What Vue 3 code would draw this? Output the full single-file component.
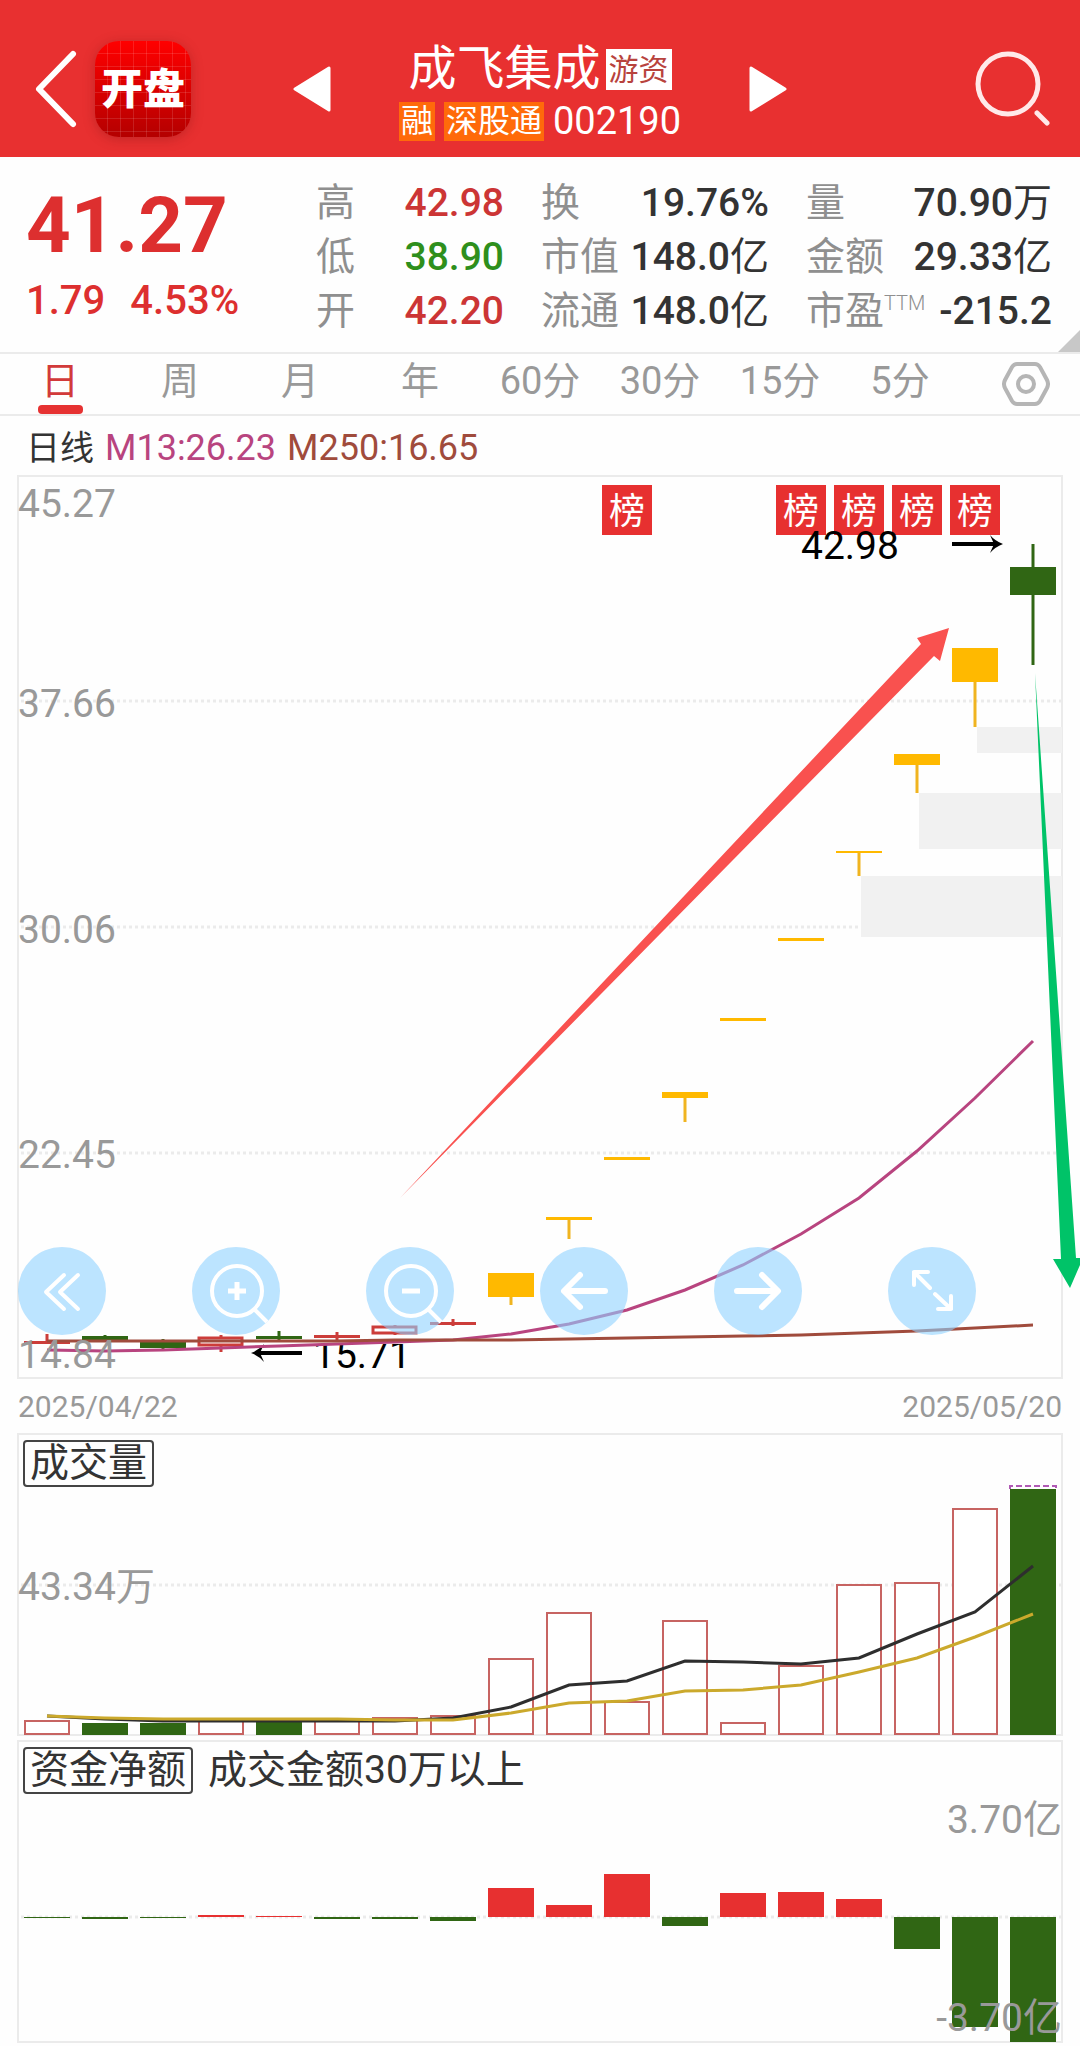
<script setup>
import { ref } from 'vue'

const stats = [
    { label: '高', value: '42.98', cls: 'up' },
    { label: '换', value: '19.76%' },
    { label: '量', value: '70.90', unit: '万' },
    { label: '低', value: '38.90', cls: 'down' },
    { label: '市值', value: '148.0', unit: '亿' },
    { label: '金额', value: '29.33', unit: '亿' },
    { label: '开', value: '42.20', cls: 'up' },
    { label: '流通', value: '148.0', unit: '亿' },
    { label: '市盈', sup: 'TTM', value: '-215.2' },
]

const periods = ['日', '周', '月', '年', '60分', '30分', '15分', '5分']
const period = ref('日')

// all three charts share the same columns
const cx = i => 30 + 58 * i
const barWidth = 46

// body top, body bottom, high, low
const candles = [
    { k: 'red', v: [866, 869, 859, 869] },
    { k: 'green', v: [861, 865, 860, 865] },
    { k: 'green', v: [867, 873, 864, 874] },
    { k: 'hollow', v: [863, 870, 860, 877] },
    { k: 'green', v: [861, 864, 856, 866] },
    { k: 'red', v: [860, 863, 857, 866] },
    { k: 'hollow', v: [852, 858, 850, 860] },
    { k: 'red', v: [847, 850, 844, 851] },
    { k: 'gold', v: [798, 822, 798, 830] },
    { k: 'gold', v: [742, 745, 742, 764] },
    { k: 'gold', v: [682, 685, 682, 685] },
    { k: 'gold', v: [617, 623, 617, 647] },
    { k: 'gold', v: [543, 546, 543, 546] },
    { k: 'gold', v: [463, 466, 463, 466] },
    { k: 'gold', v: [376, 378, 376, 401] },
    { k: 'gold', v: [279, 290, 279, 318] },
    { k: 'gold', v: [173, 207, 173, 252] },
    { k: 'green', v: [92, 120, 69, 190] },
]

const gaps = [
    { x: 960, y: 252, h: 26 },
    { x: 902, y: 318, h: 56 },
    { x: 844, y: 401, h: 61 },
]

const priceLabels = [
    { text: '45.27', y: 42 },
    { text: '37.66', y: 242 },
    { text: '30.06', y: 468 },
    { text: '22.45', y: 693 },
    { text: '14.84', y: 893 },
]

const billboards = [10, 13, 14, 15, 16]

const m13 = [875, 876, 875, 873, 871, 869, 867, 865, 859, 849, 835, 815, 790, 759, 723, 676, 623, 566]
const m250 = [866, 866, 866, 866, 866, 866, 865, 865, 865, 864, 863, 862, 861, 860, 858, 856, 853, 850]

const volumes = [
    { y: 288 }, { y: 290, down: true }, { y: 290, down: true }, { y: 288 }, { y: 288, down: true }, { y: 288 },
    { y: 285 }, { y: 283 }, { y: 226 }, { y: 180 }, { y: 269 }, { y: 188 },
    { y: 290 }, { y: 233 }, { y: 152 }, { y: 150 }, { y: 76 }, { y: 56, down: true },
]
const volMa5 = [283, 286, 288, 288, 288, 288, 288, 285, 274, 252, 248, 228, 229, 231, 225, 201, 179, 133]
const volMa10 = [283, 285, 286, 286, 286, 286, 287, 287, 280, 270, 268, 258, 257, 252, 239, 225, 204, 181]

const flows = [-1, -2, -1, 2, 1, -2, -2, -4, 29, 12, 43, -9, 24, 25, 18, -32, -110, -125]

const toPoints = ys => ys.map((y, i) => `${cx(i)},${y}`).join(' ')
</script>

<template>
    <div class="page">
        <header class="top">
            <div class="top-left">
                <button class="plain" aria-label="返回">
                    <svg width="48" height="80" viewBox="-4 0 48 80"><path d="M39 5 L5 40 L39 75" fill="none" stroke="#fff" stroke-width="6" stroke-linecap="round" stroke-linejoin="round" /></svg>
                </button>
                <div class="logo">开盘</div>
            </div>
            <div class="top-center">
                <button class="plain" aria-label="上一只">
                    <svg width="38" height="46" viewBox="0 0 38 46"><path d="M2 23 L36 2 V44 Z" fill="#fff" stroke="#fff" stroke-width="3" stroke-linejoin="round" /></svg>
                </button>
                <div class="stock">
                    <div class="stock-name">
                        <h1>成飞集成</h1>
                        <span class="tag-white">游资</span>
                    </div>
                    <div class="stock-code">
                        <span class="tag-orange">融</span>
                        <span class="tag-orange">深股通</span>
                        <span>002190</span>
                    </div>
                </div>
                <button class="plain" aria-label="下一只">
                    <svg width="38" height="46" viewBox="0 0 38 46"><path d="M36 23 L2 2 V44 Z" fill="#fff" stroke="#fff" stroke-width="3" stroke-linejoin="round" /></svg>
                </button>
            </div>
            <button class="plain search" aria-label="搜索">
                <svg width="75" height="76" viewBox="0 0 75 76" fill="none" stroke="#ffe9e9" stroke-width="5" stroke-linecap="round">
                    <circle cx="33" cy="33" r="30" />
                    <path d="M62 62 L72 72" />
                </svg>
            </button>
        </header>

        <section class="quote">
            <div class="price">
                <div class="price-now">41.27</div>
                <div class="price-change"><span>1.79</span><span>4.53%</span></div>
            </div>
            <dl class="stats">
                <div v-for="s in stats" :key="s.label" class="stat">
                    <dt>{{ s.label }}<sup v-if="s.sup">{{ s.sup }}</sup></dt>
                    <dd :class="s.cls">{{ s.value }}<span v-if="s.unit" class="unit">{{ s.unit }}</span></dd>
                </div>
            </dl>
            <i class="corner"></i>
        </section>

        <nav class="tabs">
            <button v-for="p in periods" :key="p" class="tab" :class="{ active: p === period }" @click="period = p">{{ p }}</button>
            <button class="tab settings" aria-label="设置">
                <svg width="48" height="44" viewBox="0 0 48 44" fill="none" stroke="#b5b5b5" stroke-width="4">
                    <path d="M15 2 H33 Q36 2 38 5 L45 18 Q47 22 45 26 L38 39 Q36 42 33 42 H15 Q12 42 10 39 L3 26 Q1 22 3 18 L10 5 Q12 2 15 2 Z" />
                    <circle cx="24" cy="22" r="8" />
                </svg>
            </button>
        </nav>

        <div class="legend">
            <span class="legend-name">日线</span>
            <span class="m13">M13:26.23</span>
            <span class="m250">M250:16.65</span>
        </div>

        <main class="charts">
            <div class="chart">
                <svg viewBox="0 0 1046 904">
                    <defs>
                        <clipPath id="low-clip"><rect x="290" y="869" width="120" height="34" /></clipPath>
                    </defs>
                    <rect class="frame" x="1" y="1" width="1044" height="902" />
                    <line v-for="y in [226, 452, 678]" :key="y" class="grid" x1="4" x2="1044" :y1="y" :y2="y" />
                    <rect v-for="g in gaps" :key="g.x" :x="g.x" :y="g.y" :width="1045 - g.x" :height="g.h" fill="#f1f1f1" />

                    <g v-for="i in billboards" :key="'b' + i">
                        <rect :x="cx(i) - 25" y="10" width="50" height="50" fill="#e73030" />
                        <text class="board" :x="cx(i)" y="49">榜</text>
                    </g>

                    <g v-for="(c, i) in candles" :key="i" :class="c.k">
                        <line :x1="cx(i)" :x2="cx(i)" :y1="c.v[2]" :y2="c.v[3]" stroke-width="3" />
                        <rect v-if="c.k === 'hollow'" :x="cx(i) - 22" :y="c.v[0]" :width="barWidth - 3" :height="c.v[1] - c.v[0]" stroke-width="3" />
                        <rect v-else class="body" :x="cx(i) - 23" :y="c.v[0]" :width="barWidth" :height="c.v[1] - c.v[0]" />
                    </g>

                    <text class="mark" x="784" y="84">42.98</text>
                    <path class="mark-arrow" d="M935 69 H980" />
                    <path d="M973 60 Q978 66 986 69 Q978 72 973 78 L977 69 Z" />
                    <text class="mark" x="296" y="893" clip-path="url(#low-clip)">15.71</text>
                    <path class="mark-arrow" d="M240 878 H285" />
                    <path d="M247 869 Q242 875 234 878 Q242 881 247 887 L243 878 Z" />

                    <polyline :points="toPoints(m13)" fill="none" stroke="#b8447f" stroke-width="3" />
                    <polyline :points="toPoints(m250)" fill="none" stroke="#a04b3c" stroke-width="3" />

                    <text v-for="l in priceLabels" :key="l.text" class="axis" x="1" :y="l.y">{{ l.text }}</text>

                    <path d="M383 723 L904 169 L900 163 L932 153 L923 186 L917 181 Z" fill="#f9514f" />
                    <path d="M1018 198 L1044 784 H1036 L1053 813 L1066 783 L1059 783 Z" fill="#00c368" />
                </svg>

                <div class="tools">
                    <button aria-label="更早">
                        <svg viewBox="0 0 88 88" stroke-width="4"><path d="M46 28 L28 45 L46 62 M60 28 L42 45 L60 62" /></svg>
                    </button>
                    <button aria-label="放大">
                        <svg viewBox="0 0 88 88" stroke-width="4"><circle cx="45" cy="44" r="25" /><path d="M63 63 L75 75" /><path d="M36 44 H54 M45 35 V53" stroke-width="5" stroke-linecap="butt" /></svg>
                    </button>
                    <button aria-label="缩小">
                        <svg viewBox="0 0 88 88" stroke-width="4"><circle cx="45" cy="44" r="25" /><path d="M63 63 L75 75" /><path d="M36 44 H54" stroke-width="5" stroke-linecap="butt" /></svg>
                    </button>
                    <button aria-label="左移">
                        <svg viewBox="0 0 88 88" stroke-width="6"><path d="M65 44 H25 M40 28 L24 44 L40 60" /></svg>
                    </button>
                    <button aria-label="右移">
                        <svg viewBox="0 0 88 88" stroke-width="6"><path d="M23 44 H63 M48 28 L64 44 L48 60" /></svg>
                    </button>
                    <button aria-label="全屏">
                        <svg viewBox="0 0 88 88" stroke-width="4"><path d="M40 25 H26 V38 M26 25 L42 41 M50 62 H63 V49 M63 62 L47 47" /></svg>
                    </button>
                </div>
            </div>

            <div class="dates"><time>2025/04/22</time><time>2025/05/20</time></div>

            <div class="chart">
                <svg viewBox="0 0 1046 303">
                    <rect class="frame" x="1" y="1" width="1044" height="301" />
                    <line class="grid" x1="4" x2="1044" y1="152" y2="152" />
                    <g v-for="(v, i) in volumes" :key="i">
                        <rect v-if="v.down" :x="cx(i) - 23" :y="v.y" :width="barWidth" :height="302 - v.y" fill="#306614" />
                        <rect v-else :x="cx(i) - 22" :y="v.y" :width="barWidth - 2" :height="301 - v.y" fill="#fff" stroke="#c76462" stroke-width="2" />
                    </g>
                    <path d="M993 56 V53 H1039 V56" fill="none" stroke="#b05ab4" stroke-width="2" stroke-dasharray="6 3" />
                    <polyline :points="toPoints(volMa5)" fill="none" stroke="#2e2e2e" stroke-width="3" />
                    <polyline :points="toPoints(volMa10)" fill="none" stroke="#cba92c" stroke-width="3" />
                    <text class="axis" x="1" y="167">43.34万</text>
                </svg>
                <div class="caption">
                    <button>成交量</button>
                </div>
            </div>

            <div class="chart">
                <svg viewBox="0 0 1046 303">
                    <rect class="frame" x="1" y="1" width="1044" height="301" />
                    <line class="grid" x1="4" x2="1044" y1="177" y2="177" />
                    <rect
                        v-for="(f, i) in flows"
                        :key="i"
                        :x="cx(i) - 23"
                        :y="f > 0 ? 177 - f : 177"
                        :width="barWidth"
                        :height="Math.abs(f)"
                        :fill="f > 0 ? '#e73030' : '#306614'"
                    />
                    <text class="axis end" x="1045" y="93">3.70亿</text>
                    <text class="axis end" x="1045" y="291">-3.70亿</text>
                </svg>
                <div class="caption">
                    <button>资金净额</button>
                    <span>成交金额30万以上</span>
                </div>
            </div>
        </main>
    </div>
</template>

<style>
body {
    margin: 0;
    background: #fefefe;
}
</style>

<style scoped>
.page {
    font-family: Roboto, "Noto Sans CJK SC", sans-serif;
    font-size: 39px;
    color: #333;
    overflow: hidden;
    padding-bottom: 3px;
}

button {
    font: inherit;
    color: inherit;
    cursor: pointer;
}

.plain {
    padding: 0;
    border: 0;
    background: none;
}

.plain svg {
    display: block;
}

/* header */
.top {
    display: grid;
    grid-template-columns: 1fr 494px 1fr;
    align-items: center;
    height: 157px;
    padding: 20px 30px 0;
    box-sizing: border-box;
    background: #e83030;
    color: #fff;
}

.top-left {
    display: flex;
    align-items: center;
    gap: 17px;
}

.logo {
    width: 96px;
    height: 96px;
    border-radius: 24px;
    background:
        repeating-linear-gradient(90deg, transparent 0 12px, rgba(255, 255, 255, 0.12) 12px 13px),
        repeating-linear-gradient(180deg, transparent 0 12px, rgba(255, 255, 255, 0.12) 12px 13px),
        linear-gradient(#ff0000, #b40000);
    box-shadow: 0 2px 12px rgba(120, 20, 20, 0.35);
    font-size: 42px;
    font-weight: 900;
    line-height: 98px;
    text-align: center;
}

.top-center {
    display: flex;
    align-items: center;
    justify-content: space-between;
}

.stock {
    padding-top: 11px;
}

.stock-name,
.stock-code {
    display: flex;
    align-items: center;
    justify-content: center;
}

.stock-name {
    gap: 5px;
    height: 54px;
}

.stock-name h1 {
    margin: 0;
    font-size: 48px;
    font-weight: 400;
    line-height: 54px;
}

.tag-white {
    padding: 0 3px;
    background: #fff;
    color: #b8433d;
    font-size: 30px;
    line-height: 41px;
}

.stock-code {
    gap: 9px;
    height: 50px;
    font-size: 38px;
}

.tag-orange {
    padding: 0 2px;
    background: #ff6a0a;
    font-size: 32px;
    line-height: 39px;
}

.search {
    justify-self: end;
}

/* quote */
.quote {
    position: relative;
    display: flex;
    justify-content: space-between;
    height: 195px;
    padding: 19px 28px 0 26px;
    box-sizing: border-box;
}

.price {
    color: #dd2f2f;
    font-weight: 700;
}

.price-now {
    font-size: 78px;
    line-height: 100px;
}

.price-change {
    display: flex;
    gap: 25px;
    font-size: 40px;
    font-weight: 500;
    line-height: 50px;
}

.stats {
    display: grid;
    grid-template-columns: 188px 228px 246px;
    column-gap: 37px;
    align-content: start;
    margin: 0;
}

.stat {
    display: flex;
    justify-content: space-between;
    height: 54px;
    line-height: 54px;
}

.stats dt {
    color: #8f8f8f;
}

.stats sup {
    font-size: 20px;
    font-weight: 300;
    line-height: 0;
}

.stats dd {
    margin: 0;
    font-weight: 500;
}

.stats .unit {
    font-weight: 400;
}

.up {
    color: #cc3535;
}

.down {
    color: #2e8f1c;
}

.corner {
    position: absolute;
    right: 0;
    bottom: 0;
    border: 11px solid #c8c8c8;
    border-top-color: transparent;
    border-left-color: transparent;
}

/* tabs */
.tabs {
    display: grid;
    grid-template-columns: repeat(9, 1fr);
    height: 64px;
    box-sizing: border-box;
    border-top: 2px solid #ebebeb;
    border-bottom: 2px solid #ebebeb;
}

.tab {
    position: relative;
    padding: 0;
    border: 0;
    background: none;
    color: #999;
    font-size: 38px;
    line-height: 54px;
    display: flex;
    justify-content: center;
}

.tab.active {
    color: #d23a3a;
}

.tab.active::after {
    content: "";
    position: absolute;
    bottom: 0;
    width: 45px;
    height: 9px;
    border-radius: 4px;
    background: #e63232;
}

.settings {
    align-items: center;
    padding-left: 12px;
}

/* legend */
.legend {
    display: flex;
    gap: 11px;
    height: 59px;
    padding: 0 26px;
    font-size: 36px;
    line-height: 65px;
}

.legend-name {
    font-size: 34px;
}

.m13 {
    color: #b8447f;
}

.m250 {
    color: #a04b3c;
}

/* charts */
.charts {
    padding: 0 17px;
}

.chart {
    position: relative;
}

.chart + .chart {
    margin-top: 4px;
}

.chart > svg {
    display: block;
    width: 100%;
    overflow: visible;
}

.frame {
    fill: none;
    stroke: #ebebeb;
    stroke-width: 2;
}

.grid {
    stroke: #ebebeb;
    stroke-width: 3;
    stroke-dasharray: 3 3;
}

.axis {
    fill: #999;
    font-size: 39px;
}

.end {
    text-anchor: end;
}

.board {
    fill: #fff;
    font-size: 36px;
    text-anchor: middle;
}

.mark {
    fill: #000;
    font-size: 39px;
}

.mark-arrow {
    stroke: #000;
    stroke-width: 4;
}

.red,
.hollow {
    stroke: #cc3d3a;
}

.hollow rect {
    fill: #fff;
}

.green {
    stroke: #306614;
}

.gold {
    stroke: #f0b420;
}

.body {
    stroke: none;
}

.red .body {
    fill: #cc3d3a;
}

.green .body {
    fill: #306614;
}

.gold .body {
    fill: #ffb900;
}

.tools {
    position: absolute;
    left: 1px;
    bottom: 44px;
    display: flex;
    gap: 86px;
}

.tools button {
    width: 88px;
    height: 88px;
    padding: 0;
    border: 0;
    border-radius: 50%;
    background: rgba(143, 210, 255, 0.6);
    overflow: hidden;
}

.tools svg {
    display: block;
    fill: none;
    stroke: #fff;
    stroke-linecap: round;
    stroke-linejoin: round;
}

.dates {
    display: flex;
    justify-content: space-between;
    height: 54px;
    padding: 0 1px;
    color: #999;
    font-size: 30px;
    line-height: 56px;
}

.caption {
    position: absolute;
    top: 7px;
    left: 6px;
    display: flex;
    align-items: center;
    gap: 15px;
    line-height: 43px;
}

.caption button {
    padding: 0 5px;
    border: 2px solid #444;
    border-radius: 4px;
    background: none;
}
</style>
